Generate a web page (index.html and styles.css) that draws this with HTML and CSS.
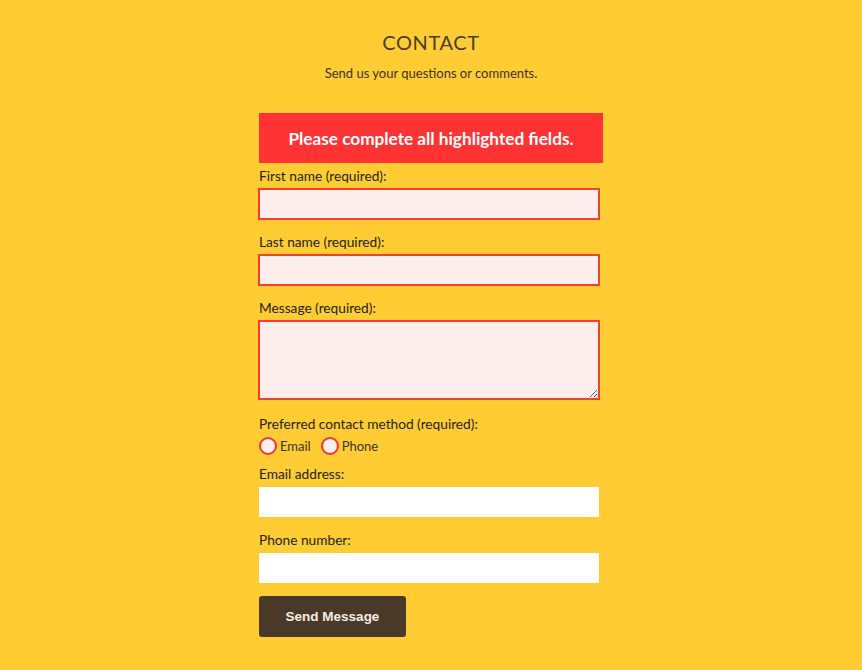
FILE: index.html
```html
<!DOCTYPE html>
<html lang="en">
<head>
<meta charset="utf-8">
<title>Contact</title>
<link rel="stylesheet" href="styles.css">
</head>
<body>
<main class="page">
  <header class="intro">
    <h1 class="title">CONTACT</h1>
    <p class="subtitle">Send us your questions or comments.</p>
  </header>
  <form class="form">
    <div class="alert">Please complete all highlighted fields.</div>
    <div class="field">
      <label class="label" for="fn">First name (required):</label>
      <input class="input is-error" id="fn" type="text">
    </div>
    <div class="field">
      <label class="label" for="ln">Last name (required):</label>
      <input class="input is-error" id="ln" type="text">
    </div>
    <div class="field field-area">
      <label class="label" for="msg">Message (required):</label>
      <textarea class="input textarea is-error" id="msg"></textarea>
    </div>
    <div class="field field-radio">
      <span class="label">Preferred contact method (required):</span>
      <div class="radios">
        <label class="radio"><input class="radio-input" type="radio" name="m"><span>Email</span></label>
        <label class="radio"><input class="radio-input" type="radio" name="m"><span>Phone</span></label>
      </div>
    </div>
    <div class="field">
      <label class="label" for="em">Email address:</label>
      <input class="input" id="em" type="email">
    </div>
    <div class="field field-last">
      <label class="label" for="ph">Phone number:</label>
      <input class="input" id="ph" type="tel">
    </div>
    <button class="button" type="button">Send Message</button>
  </form>
</main>
</body>
</html>
```

FILE: styles.css
```css
html, body {
  margin: 0;
  padding: 0;
}
body {
  background: #ffcc33;
  font-family: Lato, "Open Sans", sans-serif;
  color: #2e2a1a;
}
.page {
  width: 344px;
  margin: 0 auto;
  padding-top: 30px;
}
.intro {
  text-align: center;
}
.title {
  margin: 0;
  font-size: 20px;
  font-weight: 400;
  line-height: 24px;
  letter-spacing: 0.65px;
  color: #4a3d28;
}
.subtitle {
  margin: 10px 0 0;
  font-size: 13px;
  line-height: 18px;
  color: #3a3320;
}
.form {
  margin-top: 31px;
  display: flex;
  flex-direction: column;
}
.alert {
  height: 50px;
  background: #ff3333;
  color: #fff;
  font-weight: 700;
  font-size: 17.2px;
  display: flex;
  align-items: center;
  justify-content: center;
  margin-bottom: 4px;
}
.field {
  display: flex;
  flex-direction: column;
  margin-bottom: 14px;
  width: 340px;
}
.field-area {
  margin-bottom: 16px;
}
.field-radio {
  margin-bottom: 10px;
}
.field-last {
  margin-bottom: 13px;
}
.label {
  display: block;
  font-size: 13.7px;
  line-height: 18px;
  color: #251f10;
  margin-bottom: 4px;
}
.input {
  display: block;
  box-sizing: border-box;
  width: 340px;
  height: 30px;
  margin: 0;
  border: 1px solid #ffffff;
  background: #ffffff;
  font: inherit;
  outline: none;
  padding: 4px 6px;
}
.textarea {
  height: 78px;
  resize: vertical;
}
.is-error {
  background: #fdeeee;
  border-color: #ff3b30;
  box-shadow: 0 0 0 1px #ff3b30;
}
.radios {
  display: flex;
  gap: 10px;
  height: 18px;
  align-items: center;
}
.radio {
  display: flex;
  align-items: center;
  gap: 3px;
  font-size: 13px;
  color: #3a3320;
}
.radio-input {
  appearance: none;
  -webkit-appearance: none;
  box-sizing: border-box;
  width: 18px;
  height: 18px;
  margin: 0;
  border: 2px solid #ff3333;
  border-radius: 50%;
  background: #fdeeee;
}
.button {
  align-self: flex-start;
  width: 147px;
  height: 41px;
  border: none;
  border-radius: 3px;
  background: #4a3828;
  color: #f4efe6;
  font-family: "Liberation Sans", Arial, sans-serif;
  font-weight: 700;
  font-size: 13.5px;
  padding: 0;
  cursor: pointer;
}
```
